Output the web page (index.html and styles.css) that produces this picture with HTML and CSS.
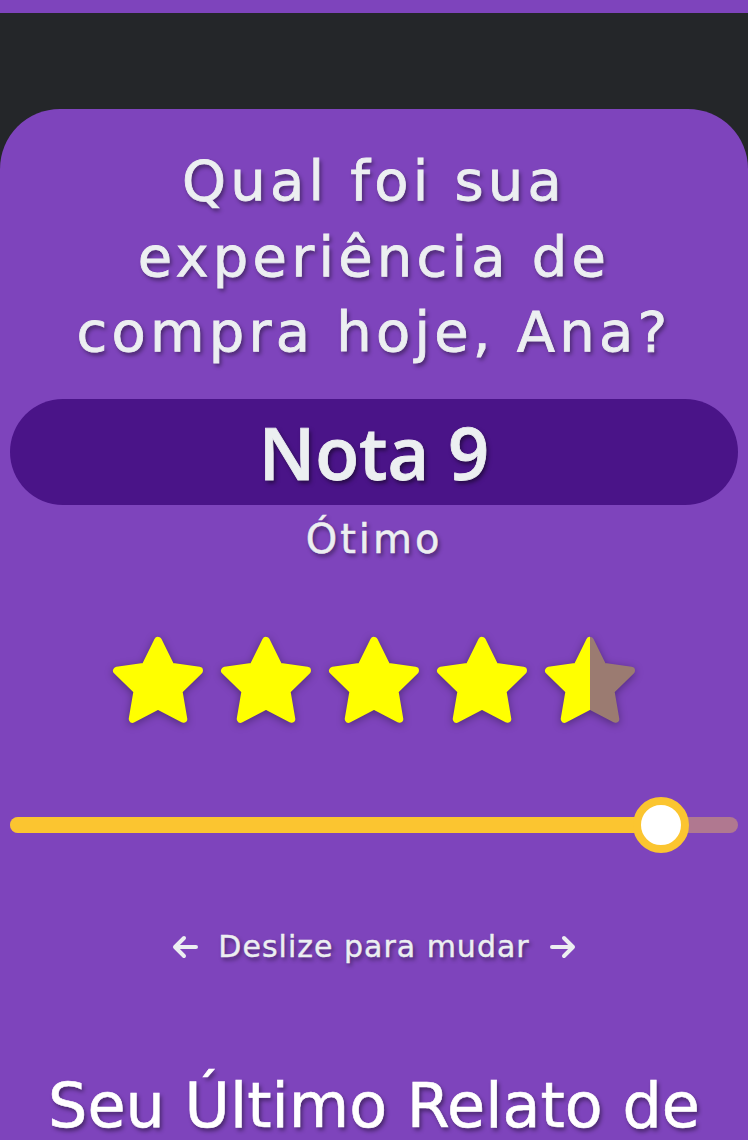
FILE: index.html
```html
<!DOCTYPE html>
<html lang="pt-BR">
<head>
<meta charset="utf-8">
<title>Avaliação</title>
<link rel="stylesheet" href="styles.css">
</head>
<body>
<div class="topbar"></div>
<main class="page">
  <section class="card">
    <h1 class="question">Qual foi sua<br>experiência de<br>compra hoje, Ana?</h1>
    <div class="score-pill"><span class="score">Nota 9</span></div>
    <p class="label">Ótimo</p>
    <div class="stars">
      <svg class="star" viewBox="0 0 100 100"><polygon class="star-full" points="50,8 62.93,34.2 91.85,38.4 70.92,58.8 75.86,87.6 50,74 24.14,87.6 29.08,58.8 8.15,38.4 37.07,34.2"/></svg>
      <svg class="star" viewBox="0 0 100 100"><polygon class="star-full" points="50,8 62.93,34.2 91.85,38.4 70.92,58.8 75.86,87.6 50,74 24.14,87.6 29.08,58.8 8.15,38.4 37.07,34.2"/></svg>
      <svg class="star" viewBox="0 0 100 100"><polygon class="star-full" points="50,8 62.93,34.2 91.85,38.4 70.92,58.8 75.86,87.6 50,74 24.14,87.6 29.08,58.8 8.15,38.4 37.07,34.2"/></svg>
      <svg class="star" viewBox="0 0 100 100"><polygon class="star-full" points="50,8 62.93,34.2 91.85,38.4 70.92,58.8 75.86,87.6 50,74 24.14,87.6 29.08,58.8 8.15,38.4 37.07,34.2"/></svg>
      <svg class="star" viewBox="0 0 100 100">
        <defs>
          <linearGradient id="half" x1="0" y1="0" x2="1" y2="0">
            <stop offset="50%" stop-color="#ffff00"/>
            <stop offset="50%" stop-color="#9b7b71"/>
          </linearGradient>
        </defs>
        <polygon class="star-half" points="50,8 62.93,34.2 91.85,38.4 70.92,58.8 75.86,87.6 50,74 24.14,87.6 29.08,58.8 8.15,38.4 37.07,34.2"/>
      </svg>
    </div>
    <div class="slider">
      <div class="track">
        <div class="fill" style="width: 650px"></div>
      </div>
      <div class="thumb" style="left: 623px"></div>
    </div>
    <div class="hint">
      <svg class="arrow" viewBox="0 0 28 28"><path d="M25 14H4M13 5L4 14L13 23"/></svg>
      <span class="hint-text">Deslize para mudar</span>
      <svg class="arrow" viewBox="0 0 28 28"><path d="M3 14H24M15 5L24 14L15 23"/></svg>
    </div>
    <h2 class="report">Seu Último Relato de</h2>
  </section>
</main>
</body>
</html>
```
FILE: styles.css
```css
html, body {
  margin: 0;
  padding: 0;
}
body {
  background: #242629;
  font-family: "DejaVu Sans", "Open Sans", sans-serif;
  overflow: hidden;
  height: 1140px;
}
.topbar {
  height: 13px;
  background: #7e44bc;
}
.page {
  padding-top: 96px;
}
.card {
  background: #7e44bc;
  border-radius: 60px 60px 0 0;
  padding: 34px 10px 0;
  text-align: center;
  min-height: 1100px;
  color: #eceff1;
}
.question {
  margin: 0;
  font-size: 56px;
  font-weight: 400;
  line-height: 75.6px;
  letter-spacing: 4.2px;
  -webkit-text-stroke: 0.8px #eceff1;
  text-shadow: 2px 3px 4px rgba(0, 0, 0, 0.45);
}
.score-pill {
  margin-top: 29px;
  height: 106px;
  border-radius: 53px;
  background: #4a1488;
  display: flex;
  align-items: center;
  justify-content: center;
}
.score {
  font-family: "Open Sans", "DejaVu Sans", sans-serif;
  font-size: 72px;
  font-weight: 600;
  -webkit-text-stroke: 0.8px #eceff1;
  text-shadow: 2px 3px 4px rgba(0, 0, 0, 0.5);
}
.label {
  margin: 7px 0 0;
  font-size: 40px;
  line-height: 54px;
  letter-spacing: 3px;
  -webkit-text-stroke: 0.5px #eceff1;
  text-shadow: 2px 3px 4px rgba(0, 0, 0, 0.45);
}
.stars {
  margin-top: 67px;
  display: flex;
  justify-content: center;
  gap: 10px;
  height: 98px;
}
.star {
  width: 98px;
  height: 98px;
  filter: drop-shadow(0 2px 4px rgba(0, 0, 0, 0.35));
}
.star-full {
  fill: #ffff00;
  stroke: #ffff00;
  stroke-width: 8;
  stroke-linejoin: round;
}
.star-half {
  fill: url(#half);
  stroke: url(#half);
  stroke-width: 8;
  stroke-linejoin: round;
}
.slider {
  position: relative;
  margin-top: 66px;
  height: 56px;
  display: flex;
  align-items: center;
}
.track {
  flex: 1;
  height: 16px;
  border-radius: 8px;
  background: #b07890;
  overflow: hidden;
}
.fill {
  height: 100%;
  background: #fbc530;
}
.thumb {
  position: absolute;
  top: 0;
  width: 40px;
  height: 40px;
  border-radius: 50%;
  background: #ffffff;
  border: 8px solid #fbc530;
}
.hint {
  margin-top: 74px;
  display: flex;
  align-items: center;
  justify-content: center;
  gap: 19px;
}
.arrow {
  width: 28px;
  height: 28px;
  fill: none;
  stroke: #eceff1;
  stroke-width: 4;
  stroke-linecap: round;
  stroke-linejoin: round;
}
.hint-text {
  font-size: 30px;
  line-height: 40px;
  letter-spacing: 1px;
  -webkit-text-stroke: 0.4px #eceff1;
  text-shadow: 2px 3px 4px rgba(0, 0, 0, 0.45);
}
.report {
  margin: 99px 0 0;
  font-size: 62px;
  font-weight: 400;
  line-height: 80px;
  color: #ffffff;
  -webkit-text-stroke: 0.6px #ffffff;
  text-shadow: 2px 3px 4px rgba(0, 0, 0, 0.45);
}
```
